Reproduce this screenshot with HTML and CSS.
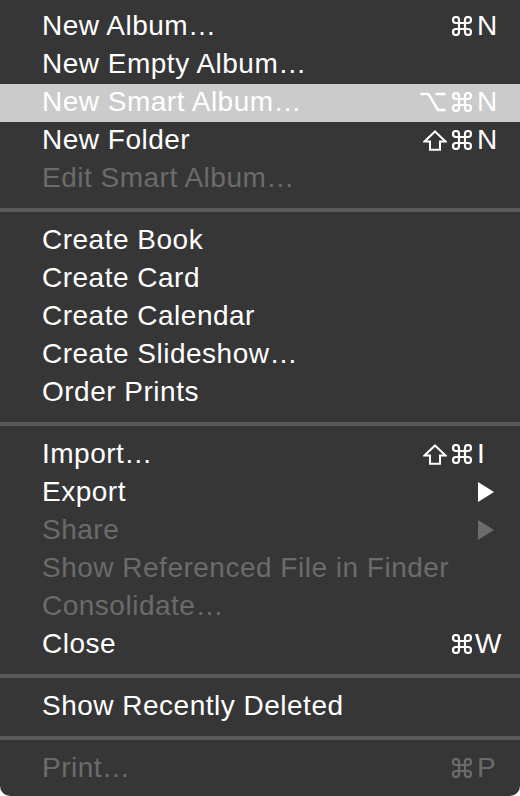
FILE: index.html
```html
<!DOCTYPE html>
<html>
<head>
<meta charset="utf-8">
<link rel="stylesheet" href="styles.css">
</head>
<body>
<div class="menu">
  <div class="row"><span class="label">New Album…</span><span class="sc"><svg class="cmd" width="22" height="20" viewBox="2 2 20 20"><path d="M9 6A3 3 0 1 0 6 9H18A3 3 0 1 0 15 6V18A3 3 0 1 0 18 15H6A3 3 0 1 0 9 18Z"/></svg><span class="key">N</span></span></div>
  <div class="row"><span class="label">New Empty Album…</span></div>
  <div class="row hl"><span class="label">New Smart Album…</span><span class="sc"><svg class="opt" width="26" height="20" viewBox="0 0 26 20"><path d="M0.5 2H8.5L18 18H25.5M15.5 2H25.5"/></svg><svg class="cmd" width="22" height="20" viewBox="2 2 20 20"><path d="M9 6A3 3 0 1 0 6 9H18A3 3 0 1 0 15 6V18A3 3 0 1 0 18 15H6A3 3 0 1 0 9 18Z"/></svg><span class="key">N</span></span></div>
  <div class="row"><span class="label">New Folder</span><span class="sc"><svg class="shift" width="24" height="21" viewBox="0 0 24 21"><path d="M12 1.5L22.5 11.5H17V19.8H7V11.5H1.5Z"/></svg><svg class="cmd" width="22" height="20" viewBox="2 2 20 20"><path d="M9 6A3 3 0 1 0 6 9H18A3 3 0 1 0 15 6V18A3 3 0 1 0 18 15H6A3 3 0 1 0 9 18Z"/></svg><span class="key">N</span></span></div>
  <div class="row dis"><span class="label">Edit Smart Album…</span></div>
  <div class="sep"></div>
  <div class="row"><span class="label">Create Book</span></div>
  <div class="row"><span class="label">Create Card</span></div>
  <div class="row"><span class="label">Create Calendar</span></div>
  <div class="row"><span class="label">Create Slideshow…</span></div>
  <div class="row"><span class="label">Order Prints</span></div>
  <div class="sep"></div>
  <div class="row"><span class="label">Import…</span><span class="sc"><svg class="shift" width="24" height="21" viewBox="0 0 24 21"><path d="M12 1.5L22.5 11.5H17V19.8H7V11.5H1.5Z"/></svg><svg class="cmd" width="22" height="20" viewBox="2 2 20 20"><path d="M9 6A3 3 0 1 0 6 9H18A3 3 0 1 0 15 6V18A3 3 0 1 0 18 15H6A3 3 0 1 0 9 18Z"/></svg><span class="key">I</span></span></div>
  <div class="row"><span class="label">Export</span><svg class="arrow" width="16" height="20" viewBox="0 0 16 20"><polygon points="0,0 16,10 0,20"/></svg></div>
  <div class="row dis"><span class="label">Share</span><svg class="arrow" width="16" height="20" viewBox="0 0 16 20"><polygon points="0,0 16,10 0,20"/></svg></div>
  <div class="row dis"><span class="label">Show Referenced File in Finder</span></div>
  <div class="row dis"><span class="label">Consolidate…</span></div>
  <div class="row"><span class="label">Close</span><span class="sc"><svg class="cmd" width="22" height="20" viewBox="2 2 20 20"><path d="M9 6A3 3 0 1 0 6 9H18A3 3 0 1 0 15 6V18A3 3 0 1 0 18 15H6A3 3 0 1 0 9 18Z"/></svg><span class="key kw">W</span></span></div>
  <div class="sep"></div>
  <div class="row"><span class="label">Show Recently Deleted</span></div>
  <div class="sep"></div>
  <div class="row dis"><span class="label">Print…</span><span class="sc"><svg class="cmd" width="22" height="20" viewBox="2 2 20 20"><path d="M9 6A3 3 0 1 0 6 9H18A3 3 0 1 0 15 6V18A3 3 0 1 0 18 15H6A3 3 0 1 0 9 18Z"/></svg><span class="key">P</span></span></div>
</div>
</body>
</html>
```
FILE: styles.css
```css
html, body {
  margin: 0;
  padding: 0;
  background: #ffffff;
}
.menu {
  width: 520px;
  height: 796px;
  box-sizing: border-box;
  background: #363636;
  padding: 8px 0;
  border-radius: 0 0 10px 10px;
  display: flex;
  flex-direction: column;
  font-family: "Liberation Sans", Arial, sans-serif;
  font-size: 28px;
  letter-spacing: 0.5px;
  color: #ffffff;
}
.row {
  height: 38px;
  box-sizing: border-box;
  line-height: 34px;
  padding: 0 20px 3px 42px;
  display: flex;
  align-items: center;
  white-space: nowrap;
}
.row .label {
  flex: 1;
}
.row.hl {
  background: #cbcbcb;
  color: #ffffff;
}
.row.dis {
  color: #6b6b6b;
}
.sep {
  height: 4px;
  margin: 10px 0;
  background: #5a5a5a;
}
.sc {
  display: flex;
  align-items: center;
  letter-spacing: 0;
  gap: 4px;
}
.sc svg {
  display: block;
  fill: none;
  stroke: currentColor;
  margin-top: 1px;
}
.cmd {
  stroke-width: 2.2;
}
.opt {
  stroke-width: 2.6;
  margin-right: 1px;
}
.shift {
  stroke-width: 2;
}
.key {
  width: 23px;
  text-align: left;
}
.key.kw {
  margin-left: -2px;
  width: 25px;
}
.arrow {
  margin-right: 6px;
  display: block;
  fill: currentColor;
}
```
